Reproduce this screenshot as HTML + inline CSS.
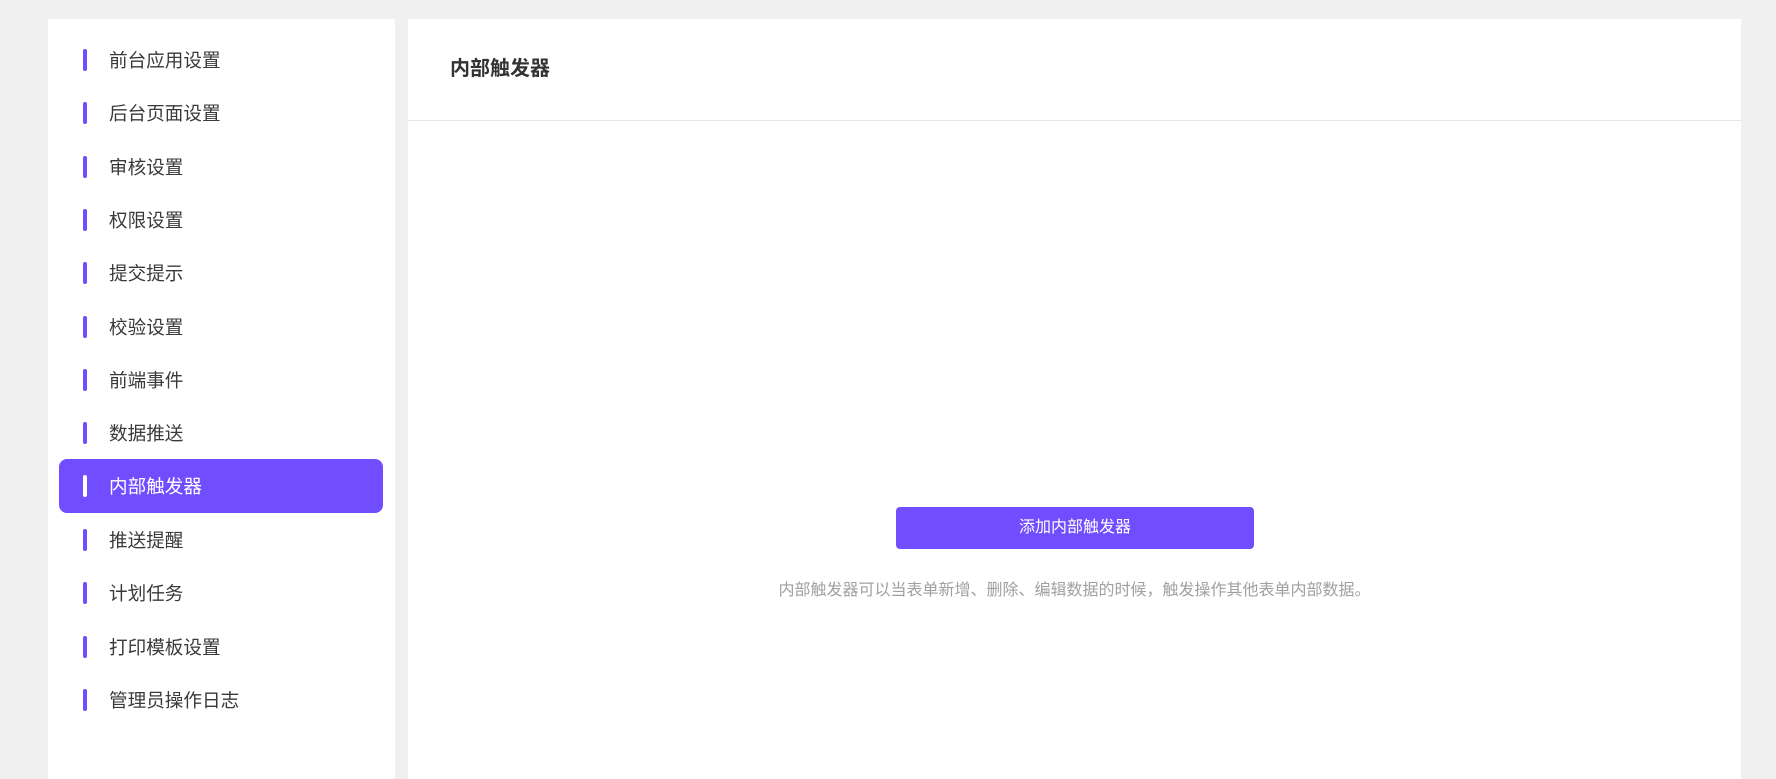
<!DOCTYPE html>
<html><head><meta charset="utf-8"><style>
body{margin:0;width:1776px;height:772px;background:#f0f0f0;font-family:"Liberation Sans","Noto Sans CJK SC",sans-serif;overflow:hidden;position:relative}
.side{position:absolute;left:48px;top:19px;width:347px;height:760px;background:#fff}
.item{position:absolute;left:11px;width:324px;height:54px;border-radius:8px;color:#3a3a3a;font-size:18.6px;line-height:54px}
.item span{position:absolute;left:50px;top:1px}
.item i{position:absolute;left:24px;top:16px;width:4px;height:22px;border-radius:2px;background:#704dff}
.item.act{background:#704dff;color:#fff}
.item.act i{background:#fff}
.main{position:absolute;left:408px;top:19px;width:1333px;height:760px;background:#fff}
.hd{height:101px;border-bottom:1px solid #e6e6e6;position:relative}
.hd b{position:absolute;left:42px;top:37px;font-size:20px;color:#333;line-height:26px}
.btn{position:absolute;left:488px;top:488px;width:358px;height:42px;background:#704dff;border-radius:4px;color:#fff;font-size:16px;line-height:42px;text-align:center}
.desc{position:absolute;left:0;width:1333px;top:562px;text-align:center;color:#a0a0a0;font-size:16px;line-height:20px}
</style></head><body>
<div class="side">
<div class="item" style="top:14px"><i></i><span>前台应用设置</span></div>
<div class="item" style="top:67px"><i></i><span>后台页面设置</span></div>
<div class="item" style="top:121px"><i></i><span>审核设置</span></div>
<div class="item" style="top:174px"><i></i><span>权限设置</span></div>
<div class="item" style="top:227px"><i></i><span>提交提示</span></div>
<div class="item" style="top:281px"><i></i><span>校验设置</span></div>
<div class="item" style="top:334px"><i></i><span>前端事件</span></div>
<div class="item" style="top:387px"><i></i><span>数据推送</span></div>
<div class="item act" style="top:440px"><i></i><span>内部触发器</span></div>
<div class="item" style="top:494px"><i></i><span>推送提醒</span></div>
<div class="item" style="top:547px"><i></i><span>计划任务</span></div>
<div class="item" style="top:601px"><i></i><span>打印模板设置</span></div>
<div class="item" style="top:654px"><i></i><span>管理员操作日志</span></div>
</div>
<div class="main">
<div class="hd"><b>内部触发器</b></div>
<div class="btn">添加内部触发器</div>
<div class="desc">内部触发器可以当表单新增、删除、编辑数据的时候，触发操作其他表单内部数据。</div>
</div>
</body></html>
